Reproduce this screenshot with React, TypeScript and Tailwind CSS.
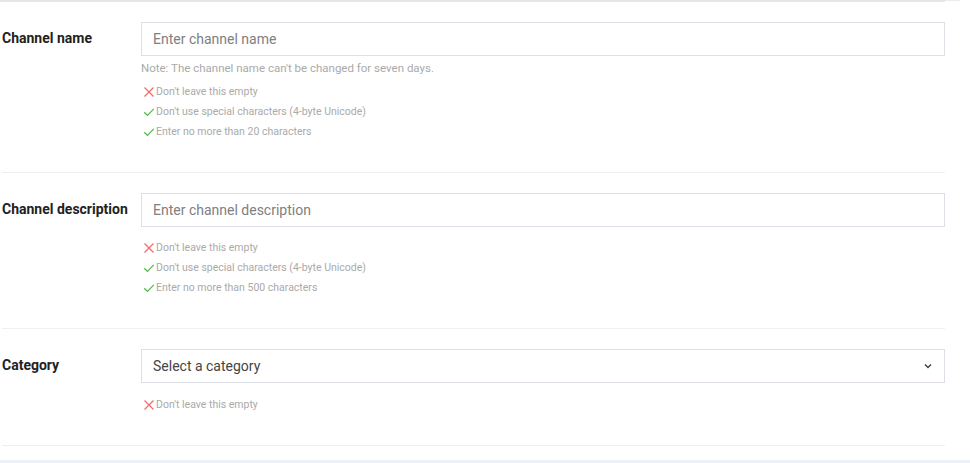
import React from 'react';

type Rule = { ok: boolean; text: string };

interface FieldProps {
  label: string;
  placeholder: string;
  select?: boolean;
  note?: string;
  rules: Rule[];
  rulesGap: string;
}

const CrossIcon = () => (
  <svg width="12" height="12" viewBox="0 0 12 12" className="shrink-0">
    <path d="M1.5 1.5 L10.5 10.5 M10.5 1.5 L1.5 10.5" stroke="#f56c6c" strokeWidth="1.3" fill="none" />
  </svg>
);

const CheckIcon = () => (
  <svg width="12" height="12" viewBox="0 0 12 12" className="shrink-0">
    <path d="M1.2 6.2 L4.5 9.3 L10.8 2.8" stroke="#55b94a" strokeWidth="1.2" fill="none" />
  </svg>
);

const Chevron = () => (
  <svg width="8" height="6" viewBox="0 0 8 6">
    <path d="M1 1.5 L4 4.5 L7 1.5" stroke="#444" strokeWidth="1.5" fill="none" />
  </svg>
);

function Field({ label, placeholder, select, note, rules, rulesGap }: FieldProps) {
  return (
    <div className="border-b border-[#efefef] pt-5 pb-[30px]">
      <div className="flex items-center">
        <label className="w-[139px] shrink-0 text-[14px] font-bold text-[#222] -mt-[1px]">{label}</label>
        {select ? (
          <div className="flex-1 h-[34px] border border-[#dcdfe6] flex items-center justify-between pl-[11px] pr-[12px] text-[14px] text-[#444]">
            <span>{placeholder}</span>
            <Chevron />
          </div>
        ) : (
          <input
            placeholder={placeholder}
            className="flex-1 h-[34px] border border-[#dcdfe6] pl-[11px] text-[14px] outline-none placeholder:text-[#808080]"
          />
        )}
      </div>
      <div className="pl-[139px]">
        {note && <div className="mt-[5px] text-[11.5px] leading-[14px] text-[#aaa]">{note}</div>}
        <div className={rulesGap}>
          {rules.map((r) => (
            <div key={r.text} className="flex items-center gap-[1px] h-5 pl-[2px] text-[10.5px] text-[#aaa]">
              {r.ok ? <CheckIcon /> : <CrossIcon />}
              <span>{r.text}</span>
            </div>
          ))}
        </div>
      </div>
    </div>
  );
}

export default function App() {
  return (
    <div className="w-[970px] h-[463px] bg-white font-['Roboto',sans-serif] flex flex-col overflow-hidden">
      {/* top edge: thicker line over the form, thin tail past it */}
      <div className="flex items-start h-[2px]">
        <div className="w-[945px] h-[2px] bg-[#e6e6e6]" />
        <div className="w-[15px] h-[1px] bg-[#ececec]" />
      </div>
      <div className="pl-[2px] pr-[25px]">
        <Field
          label="Channel name"
          placeholder="Enter channel name"
          note="Note: The channel name can't be changed for seven days."
          rulesGap="mt-[7px]"
          rules={[
            { ok: false, text: "Don't leave this empty" },
            { ok: true, text: "Don't use special characters (4-byte Unicode)" },
            { ok: true, text: 'Enter no more than 20 characters' },
          ]}
        />
        <Field
          label="Channel description"
          placeholder="Enter channel description"
          rulesGap="mt-[11px]"
          rules={[
            { ok: false, text: "Don't leave this empty" },
            { ok: true, text: "Don't use special characters (4-byte Unicode)" },
            { ok: true, text: 'Enter no more than 500 characters' },
          ]}
        />
        <Field
          label="Category"
          placeholder="Select a category"
          select
          rulesGap="mt-[12px]"
          rules={[{ ok: false, text: "Don't leave this empty" }]}
        />
      </div>
      <div className="mt-[14px] h-[3px] bg-[#edf0f4]" />
    </div>
  );
}
